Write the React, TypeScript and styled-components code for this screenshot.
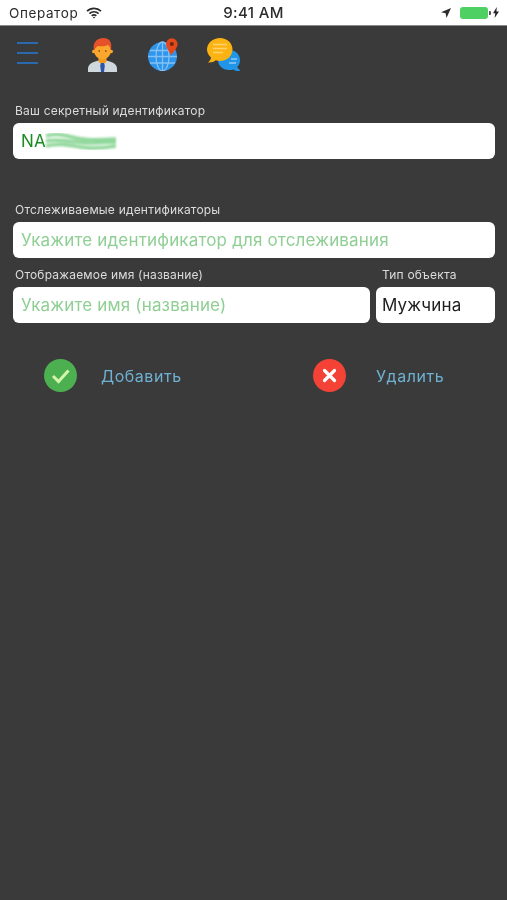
import { createGlobalStyle } from "styled-components"
import styled from "styled-components"

const GlobalStyle = createGlobalStyle`
  html, body {
    margin: 0;
    padding: 0;
    background: #3a3a3a;
  }
  body {
    font-family: Inter, "Liberation Sans", sans-serif;
  }
`

const Screen = styled.div`
  width: 507px;
  height: 900px;
  background: #3a3a3a;
  overflow: hidden;
  filter: blur(0.35px);
`

/* status bar */
const StatusBar = styled.div`
  height: 25px;
  background: #fff;
  border-bottom: 1px solid #8a8a8a;
  display: grid;
  grid-template-columns: 1fr auto 1fr;
  align-items: center;
  color: #2c2c2c;
  font-size: 13.5px;
`
const StatusLeft = styled.div`
  display: flex;
  align-items: center;
  gap: 8px;
  padding-left: 9px;
  letter-spacing: 0.6px;
`
const Clock = styled.div`
  font-size: 15px;
  font-weight: 500;
  letter-spacing: 0.35px;
`
const StatusRight = styled.div`
  display: flex;
  align-items: center;
  justify-content: flex-end;
  padding-right: 8px;
`
const Battery = styled.div`
  width: 28px;
  height: 12px;
  margin-left: 9px;
  border-radius: 3px;
  background: #4fd062;
  position: relative;
  &::after {
    content: "";
    position: absolute;
    right: -3px;
    top: 4px;
    width: 2px;
    height: 4px;
    border-radius: 0 1px 1px 0;
    background: #555;
  }
`

/* toolbar */
const Toolbar = styled.nav`
  height: 48px;
  display: flex;
  align-items: center;
  padding: 9px 0 0 17px;
  box-sizing: border-box;
`
const Burger = styled.div`
  width: 21px;
  display: flex;
  flex-direction: column;
  gap: 8px;
  margin: 0 50px 4px 0;
  span {
    display: block;
    height: 2px;
    background: #2a69ad;
  }
`
const Icons = styled.div`
  display: flex;
  align-items: center;
`
const IconSlot = styled.div<{ $w: number; $gap: number }>`
  width: ${(p) => p.$w}px;
  margin-right: ${(p) => p.$gap}px;
  display: flex;
  svg {
    display: block;
  }
`

/* form */
const Form = styled.main`
  padding: 0 12px 0 13px;
`
const Label = styled.label`
  display: block;
  color: #dcdcdc;
  font-size: 12px;
  line-height: 15px;
  padding-left: 2px;
  letter-spacing: 0.2px;
`
const Field = styled.div<{ $tone?: "value" | "hint" | "plain" }>`
  height: 36px;
  box-sizing: border-box;
  background: #fff;
  border-radius: 6px;
  display: flex;
  align-items: center;
  padding-left: 8px;
  font-size: 17px;
  letter-spacing: 0.17px;
  white-space: nowrap;
  color: ${(p) =>
    p.$tone === "value" ? "#1f8a24" : p.$tone === "plain" ? "#1e1e1e" : "#8fcf94"};
`
const PlainField = styled(Field)`
  padding-left: 6px;
`
const SecretBlock = styled.section`
  margin-top: 29px;
  display: flex;
  flex-direction: column;
  gap: 5px;
`
const TrackBlock = styled.section`
  margin-top: 43px;
  display: flex;
  flex-direction: column;
  gap: 5px;
`
const NameRow = styled.div`
  margin-top: 9px;
  display: grid;
  grid-template-columns: 357px 119px;
  column-gap: 6px;
`
const NameCol = styled.div`
  display: flex;
  flex-direction: column;
  gap: 5px;
`
const TypeLabel = styled(Label)`
  padding-left: 6px;
`
const Actions = styled.div`
  margin-top: 36px;
  display: grid;
  grid-template-columns: 269px 1fr;
  padding-left: 31px;
`
const Action = styled.button`
  all: unset;
  display: flex;
  align-items: center;
  gap: 24px;
  color: #6fb1d3;
  font-size: 16px;
  letter-spacing: 0.55px;
`
const ActionWide = styled(Action)`
  gap: 30px;
`
const Scribble = styled.svg`
  margin-left: -1px;
`

const Wifi = () => (
  <svg width="16" height="12" viewBox="0 0 16 12" fill="none" stroke="#2c2c2c" strokeWidth="1.7" strokeLinecap="butt">
    <path d="M1 4.2a10 10 0 0 1 14 0" />
    <path d="M3.4 6.6a6.6 6.6 0 0 1 9.2 0" />
    <path d="M5.7 8.9a3.3 3.3 0 0 1 4.6 0" />
    <path d="M8 11.6 6.8 10.3a1.7 1.7 0 0 1 2.4 0Z" fill="#2c2c2c" stroke="none" />
  </svg>
)

const Arrow = () => (
  <svg width="10" height="10" viewBox="0 0 10 10">
    <path d="M10 0 0 4.3l4.6.9.9 4.8Z" fill="#2c2c2c" />
  </svg>
)

const Bolt = () => (
  <svg width="6" height="11" viewBox="0 0 6 11" style={{ marginLeft: 5 }}>
    <path d="M3.8 0 0 6.2h2.3L1.6 11 6 4.4H3.4Z" fill="#222" />
  </svg>
)

const PersonIcon = () => (
  <svg width="29" height="34" viewBox="0 0 29 34">
    <path d="M0 34v-3c0-4 3-6 6.500-7.200l4-1.300h8l4 1.300C26 25 29 27 29 31v3Z" fill="#cfd8dc" />
    <path d="M10.500 18h8v4.500c0 2-2 3.500-4 3.500s-4-1.500-4-3.500Z" fill="#f39a1e" />
    <path d="M13 25h3l.8 2.500-.8 6.500h-3l-.8-6.500Z" fill="#2a56a8" />
    <ellipse cx="14.500" cy="12.500" rx="8.500" ry="9" fill="#fba62c" />
    <circle cx="5.800" cy="13.500" r="1.800" fill="#fba62c" />
    <circle cx="23.200" cy="13.500" r="1.800" fill="#fba62c" />
    <path d="M6 12.500C4 5 8.500 0 15.500 0c5.500 0 9 3.500 7.500 12.500-.7-3-1.500-4.500-3-5.500-3 1.500-7 1.500-10 1-1.500 1-3 2.500-4 4.500Z" fill="#e6502a" />
    <circle cx="11.200" cy="13" r=".9" fill="#9a5a12" />
    <circle cx="17.800" cy="13" r=".9" fill="#9a5a12" />
  </svg>
)

const GlobeIcon = () => (
  <svg width="30" height="33" viewBox="0 0 30 33">
    <circle cx="14.500" cy="18.500" r="14.500" fill="#2f95ea" />
    <g stroke="#84c2f6" strokeWidth="1.300" fill="none">
      <ellipse cx="14.500" cy="18.500" rx="6.500" ry="14.500" />
      <path d="M14.500 4v29M2 12.500h25M0 18.500h29M2 25h25" />
    </g>
    <path d="M23.500 17C20.500 12.500 18 9.500 18 6a5.800 5.800 0 0 1 11.600 0c0 3.500-3 6.500-6.100 11Z" fill="#e4481b" />
    <circle cx="23.800" cy="6" r="2.100" fill="#6b2a12" />
  </svg>
)

const ChatIcon = () => (
  <svg width="34" height="34" viewBox="0 0 34 34">
    <path d="M21 12h1c6 0 11 4 11 10 0 3-1 5.500-3 7l3.500 4c-3 .3-5.500-.3-7-1.500-1.300.4-3 .5-4.500.5-6.500 0-11-4.500-11-10S15 12 21 12Z" fill="#2196e8" />
    <g stroke="#90caf9" strokeWidth="1.300">
      <path d="M24 21h6M22 25h7" />
    </g>
    <path d="M13 0c7 0 12.500 5 12.500 11.500S20 23 13 23c-1.500 0-3-.2-4.300-.7C7 24 4 24.800 1 24.500c1.500-1.300 2.800-3 3-5C1.500 17.300 0 14.700 0 11.500 0 5 6 0 13 0Z" fill="#fbb213" />
    <g stroke="#fdd36a" strokeWidth="1.500">
      <path d="M6 6.500h14M6 10.500h14M6 14.500h10" />
    </g>
  </svg>
)

const CheckIcon = () => (
  <svg width="33" height="33" viewBox="0 0 33 33">
    <circle cx="16.500" cy="16.500" r="16.500" fill="#4caf50" />
    <path d="M9 17l5.500 5.500L24.500 11.500" fill="none" stroke="#d4f5a8" strokeWidth="3" />
  </svg>
)

const CrossIcon = () => (
  <svg width="33" height="33" viewBox="0 0 33 33">
    <circle cx="16.500" cy="16.500" r="16.500" fill="#f44336" />
    <path d="M11.500 11.500l10 10M21.500 11.500l-10 10" fill="none" stroke="#fff" strokeWidth="3.200" strokeLinecap="round" />
  </svg>
)

export default function App() {
  return (
    <Screen>
      <GlobalStyle />
      <StatusBar>
        <StatusLeft>
          Оператор
          <Wifi />
        </StatusLeft>
        <Clock>9:41 AM</Clock>
        <StatusRight>
          <Arrow />
          <Battery />
          <Bolt />
        </StatusRight>
      </StatusBar>

      <Toolbar>
        <Burger>
          <span />
          <span />
          <span />
        </Burger>
        <Icons>
          <IconSlot $w={29} $gap={31}>
            <PersonIcon />
          </IconSlot>
          <IconSlot $w={30} $gap={29}>
            <GlobeIcon />
          </IconSlot>
          <IconSlot $w={34} $gap={0}>
            <ChatIcon />
          </IconSlot>
        </Icons>
      </Toolbar>

      <Form>
        <SecretBlock>
          <Label>Ваш секретный идентификатор</Label>
          <Field $tone="value">
            NA
            <Scribble width="72" height="20" viewBox="0 0 72 20">
              <defs>
                <filter id="smear">
                  <feGaussianBlur stdDeviation="1.200" />
                </filter>
              </defs>
              <g filter="url(#smear)" fill="none" stroke="#8fd79a" strokeWidth="3.500">
                <path d="M1 5c10-3 18-1 30 2s26 2 40 1" />
                <path d="M1 10c14-3 28 2 40 2s20-1 30-1" />
                <path d="M1 15c12-3 22-1 34 1s24 1 36-1" />
              </g>
            </Scribble>
          </Field>
        </SecretBlock>

        <TrackBlock>
          <Label>Отслеживаемые идентификаторы</Label>
          <Field>Укажите идентификатор для отслеживания</Field>
        </TrackBlock>

        <NameRow>
          <NameCol>
            <Label>Отображаемое имя (название)</Label>
            <Field>Укажите имя (название)</Field>
          </NameCol>
          <NameCol>
            <TypeLabel>Тип объекта</TypeLabel>
            <PlainField $tone="plain">Мужчина</PlainField>
          </NameCol>
        </NameRow>

        <Actions>
          <Action>
            <CheckIcon />
            Добавить
          </Action>
          <ActionWide>
            <CrossIcon />
            Удалить
          </ActionWide>
        </Actions>
      </Form>
    </Screen>
  )
}
